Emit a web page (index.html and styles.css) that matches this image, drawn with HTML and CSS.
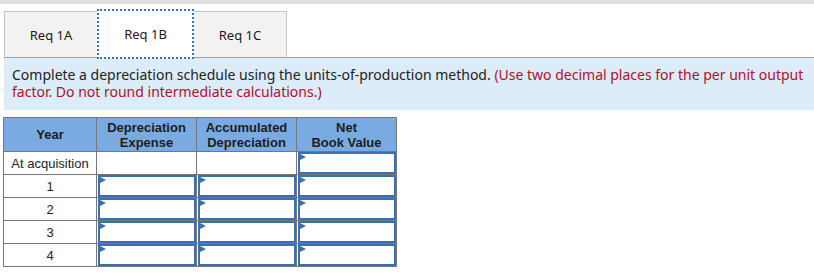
FILE: index.html
```html
<!DOCTYPE html>
<html lang="en">
<head>
  <meta charset="UTF-8" />
  <title>Req 1B</title>
  <link rel="stylesheet" href="styles.css">
</head>
<body>
  <div class="top-bar"></div>

  <div class="tabs">
    <div class="tab">Req 1A</div>
    <div class="tab active">Req 1B</div>
    <div class="tab">Req 1C</div>
    <div class="tab-fill"></div>
  </div>

  <div class="instructions">
    Complete a depreciation schedule using the units-of-production method.
    <span class="hint">(Use two decimal places for the per unit output factor. Do not round intermediate calculations.)</span>
  </div>

  <table class="schedule">
    <colgroup>
      <col class="year-col">
      <col class="num-col">
      <col class="num-col">
      <col class="num-col">
    </colgroup>
    <thead>
      <tr>
        <th>Year</th>
        <th>Depreciation<br>Expense</th>
        <th>Accumulated<br>Depreciation</th>
        <th>Net<br>Book Value</th>
      </tr>
    </thead>
    <tbody>
      <tr>
        <td class="year">At acquisition</td>
        <td class="blank"></td>
        <td class="blank"></td>
        <td class="entry"><div class="field"></div></td>
      </tr>
      <tr>
        <td class="year">1</td>
        <td class="entry"><div class="field"></div></td>
        <td class="entry"><div class="field"></div></td>
        <td class="entry"><div class="field"></div></td>
      </tr>
      <tr>
        <td class="year">2</td>
        <td class="entry"><div class="field"></div></td>
        <td class="entry"><div class="field"></div></td>
        <td class="entry"><div class="field"></div></td>
      </tr>
      <tr>
        <td class="year">3</td>
        <td class="entry"><div class="field"></div></td>
        <td class="entry"><div class="field"></div></td>
        <td class="entry"><div class="field"></div></td>
      </tr>
      <tr>
        <td class="year">4</td>
        <td class="entry"><div class="field"></div></td>
        <td class="entry"><div class="field"></div></td>
        <td class="entry"><div class="field"></div></td>
      </tr>
    </tbody>
  </table>
</body>
</html>
```

FILE: styles.css
```css
* {
  margin: 0;
  padding: 0;
  box-sizing: border-box;
}

body {
  width: 814px;
  height: 276px;
  background: #fff;
  font-family: 'Noto Sans', sans-serif;
  color: #222;
  overflow: hidden;
}

.top-bar {
  height: 4px;
  background: #e0e0e0;
}

.tabs {
  display: flex;
  align-items: flex-end;
  height: 54px;
  padding-left: 4px;
}

.tab {
  width: 94px;
  height: 47px;
  display: flex;
  align-items: center;
  justify-content: center;
  background: #f2f2f2;
  border: 1px solid #c4c4c4;
  border-bottom: 1px solid #a0a0a0;
  font-size: 13px;
  color: #1a1a1a;
}

.tab + .tab {
  margin-left: -1px;
}

.tab.active {
  width: 97px;
  height: 50px;
  margin-bottom: -1px;
  background: #fff;
  border: 2px dotted #3f72b8;
  position: relative;
  z-index: 1;
}

.tab-fill {
  flex: 1;
  border-bottom: 1px solid #a0a0a0;
}

.instructions {
  margin-left: 4px;
  height: 52px;
  background: #dcecf9;
  padding: 8px 6px 0 8px;
  font-size: 14px;
  line-height: 17px;
  color: #222;
}

.hint {
  color: #b0102a;
}

.schedule {
  margin: 7px 0 0 3px;
  border-collapse: collapse;
  table-layout: fixed;
  width: 394px;
  font-family: 'Liberation Sans', Arial, sans-serif;
  font-size: 13px;
  color: #222;
}

.year-col {
  width: 93px;
}

.num-col {
  width: 100px;
}

.schedule th {
  background: #79aae2;
  border: 1px solid #777;
  font-weight: bold;
  line-height: 15px;
  height: 34px;
  text-align: center;
  vertical-align: middle;
  color: #1d1d1d;
}

.schedule td {
  height: 23px;
  border: 1px solid #777;
  padding: 0;
}

.schedule td.year {
  text-align: center;
  white-space: nowrap;
}

.schedule td.entry {
  position: relative;
}

.field {
  position: absolute;
  inset: 0 0 0 1px;
  border: 2px solid #3a6fb2;
  background: #fff;
}

.field::before {
  content: "";
  position: absolute;
  top: 0;
  left: 0;
  border-top: 3px solid transparent;
  border-bottom: 3px solid transparent;
  border-left: 6px solid #3a6fb2;
}
```
